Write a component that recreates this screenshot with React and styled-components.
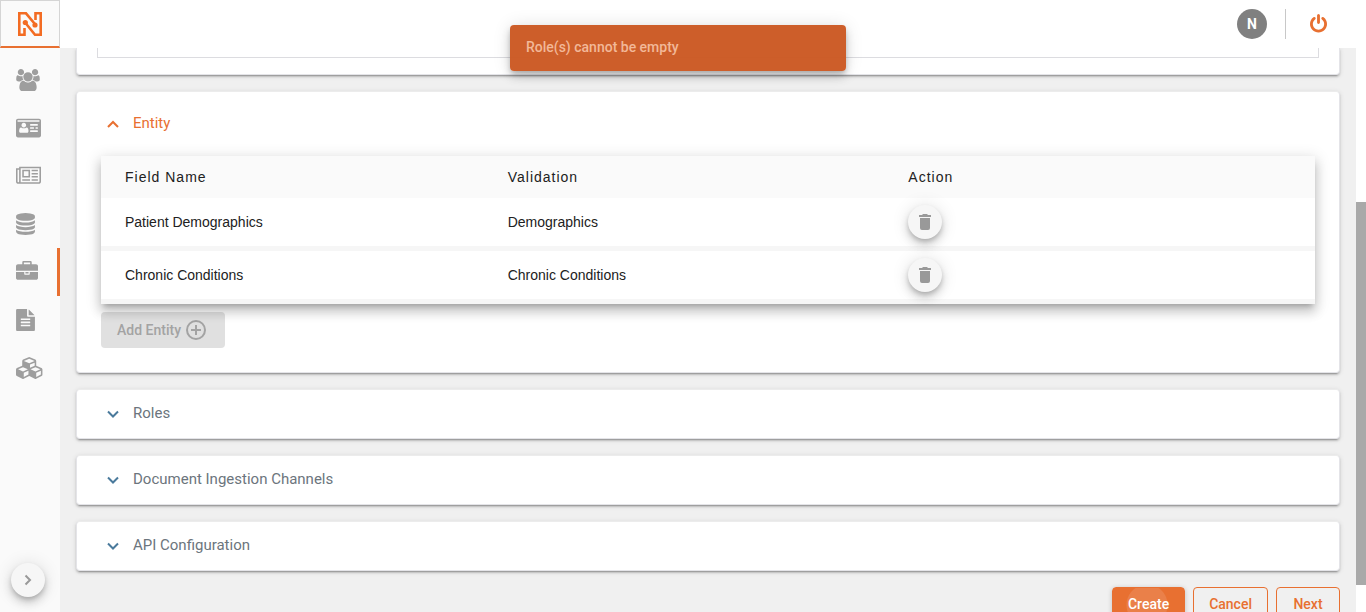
import React from "react";
import styled, { createGlobalStyle } from "styled-components";

const orange = "#e87031";
const grey = "#9e9e9e";

const GlobalStyle = createGlobalStyle`
  * { box-sizing: border-box; }
  body { margin: 0; font-family: Roboto, "Liberation Sans", sans-serif; font-size: 14px; background: #fff; }
  button { font: inherit; cursor: pointer; padding: 0; }
  h2 { margin: 0; font: inherit; }
`;

const App = styled.div`
  position: relative;
  display: flex;
  flex-direction: column;
  height: 100vh;
  overflow: hidden;
`;

const Header = styled.header`
  display: flex;
  align-items: center;
  flex: 0 0 48px;
  background: #fff;
`;

const Logo = styled.a`
  display: flex;
  align-items: center;
  justify-content: center;
  width: 60px;
  height: 48px;
  margin-right: auto;
  background: #fafafa;
  border: 1px solid #d5d5d5;
  border-bottom: 2px solid ${orange};
`;

const Avatar = styled.button`
  width: 30px;
  height: 30px;
  border: 0;
  border-radius: 50%;
  background: #808080;
  color: #fff;
  font-weight: 700;
`;

const Divider = styled.span`
  width: 1px;
  height: 30px;
  margin: 0 24px 0 18px;
  background: #c8c8c8;
`;

const PowerButton = styled.button`
  display: flex;
  margin-right: 39px;
  border: 0;
  background: none;
  color: ${orange};
`;

const Body = styled.div`
  display: flex;
  flex: 1;
  min-height: 0;
`;

const Sidebar = styled.nav`
  display: flex;
  flex-direction: column;
  flex: 0 0 60px;
  padding: 8px 0 15px;
  background: #fafafa;
`;

const NavLink = styled.a`
  display: flex;
  align-items: center;
  height: 48px;
  padding-left: 16px;
  color: ${grey};
  border-right: 3px solid ${(p) => (p.$active ? orange : "transparent")};
`;

const RoundButton = styled.button`
  display: flex;
  align-items: center;
  justify-content: center;
  width: 34px;
  height: 34px;
  border: 0;
  border-radius: 50%;
  background: #f6f6f6;
  color: #999;
  box-shadow: 0 3px 5px -1px rgba(0, 0, 0, 0.2), 0 6px 10px rgba(0, 0, 0, 0.14), 0 1px 18px rgba(0, 0, 0, 0.12);
`;

const ExpandSlot = styled.div`
  margin: auto 0 0 11px;
`;

const Main = styled.main`
  display: flex;
  flex-direction: column;
  flex: 1;
  gap: 16px;
  min-width: 0;
  padding: 0 16px;
  overflow: hidden;
  background: #f0f0f0;
`;

const Card = styled.section`
  flex: none;
  background: #fff;
  border: 1px solid #e4e4e8;
  border-top-color: #ececec;
  border-radius: 4px;
  box-shadow: 0 3px 1px -2px rgba(0, 0, 0, 0.2), 0 2px 2px rgba(0, 0, 0, 0.14), 0 1px 5px rgba(0, 0, 0, 0.12);
`;

const ScrolledCard = styled(Card)`
  padding: 0 20px 16px;
  border-top: 0;
  border-radius: 0 0 4px 4px;
`;

const ScrolledFrame = styled.div`
  height: 10px;
  border: 1px solid #dcdce0;
  border-top: 0;
`;

const CardToggle = styled.button`
  display: flex;
  align-items: center;
  gap: 14px;
  width: 100%;
  height: ${(p) => (p.$open ? 64 : 48)}px;
  padding: 0 30px;
  border: 0;
  background: none;
  color: ${(p) => (p.$open ? orange : "#6c757d")};
  font-size: 15px;
  line-height: 20px;
  text-align: left;
  svg { color: ${(p) => (p.$open ? orange : "#4a7a9c")}; }
  span { padding-bottom: 2px; }
`;

const CardBody = styled.div`
  padding: 0 24px 24px;
`;

const Table = styled.table`
  position: relative;
  width: 100%;
  margin-bottom: 8px;
  table-layout: fixed;
  border-collapse: separate;
  border-spacing: 0;
  background: #fff;
  color: #212121;
  font: 14px/20px "Liberation Sans", Arial, sans-serif;
  box-shadow: 0 5px 5px -3px rgba(0, 0, 0, 0.2), 0 8px 10px 1px rgba(0, 0, 0, 0.14), 0 3px 14px 2px rgba(0, 0, 0, 0.12);
`;

const HeadCell = styled.th`
  width: ${(p) => p.$width || "auto"};
  height: 42px;
  padding: 0;
  background: #fafafa;
  font-weight: 400;
  letter-spacing: 1px;
  text-align: left;
  &:first-child { padding-left: 24px; }
`;

const Cell = styled.td`
  height: 53px;
  padding: 0;
  border-bottom: 5px solid #f6f6f6;
  &:first-child { padding-left: 24px; }
`;

const AddButton = styled.button`
  display: flex;
  align-items: center;
  gap: 4px;
  height: 36px;
  padding: 0 18px 0 16px;
  border: 0;
  border-radius: 4px;
  background: #e0e0e0;
  color: #a3a3a3;
  font-weight: 500;
`;

const Actions = styled.div`
  display: flex;
  flex: none;
  justify-content: flex-end;
  gap: 8px;
`;

const ActionButton = styled.button`
  min-width: 64px;
  height: 36px;
  padding: 0 15px 2px;
  border: 1px solid ${orange};
  border-radius: 4px;
  background: ${(p) => (p.$primary ? `radial-gradient(circle at 48% 50%, #ea8049 20px, ${orange} 21px)` : "transparent")};
  background-origin: border-box;
  color: ${(p) => (p.$primary ? "#fff" : orange)};
  font-weight: 500;
  box-shadow: ${(p) => (p.$primary ? "0 1px 5px rgba(0, 0, 0, 0.2)" : "none")};
`;

const ScrollTrack = styled.div`
  display: grid;
  grid-template-rows: 154fr 383fr 27fr;
  flex: 0 0 10px;
  background: #fff;
`;

const ScrollThumb = styled.div`
  grid-row: 2;
  background: #a9a9a9;
`;

const Toast = styled.div`
  position: absolute;
  top: 25px;
  left: calc(50% - 5px);
  width: 336px;
  padding: 12px 16px 14px;
  transform: translateX(-50%);
  border-radius: 4px;
  background: rgba(203, 89, 35, 0.97);
  color: #f2b898;
  font-weight: 500;
  line-height: 20px;
  box-shadow: 0 3px 5px -1px rgba(0, 0, 0, 0.2), 0 6px 10px rgba(0, 0, 0, 0.14), 0 1px 18px rgba(0, 0, 0, 0.12);
`;

const Glyph = ({ units = 1792, x = 0, size = 22, d }) => (
  <svg
    width={Math.round((units * size) / 1792)}
    height={size}
    viewBox={`${x} 0 ${units} 1792`}
    fill="currentColor"
    fillRule="evenodd"
    aria-hidden="true"
  >
    <path d={d} />
  </svg>
);

const powerPath =
  "M1664 896q0 156-61 298t-164 245-245 164-298 61-298-61-245-164-164-245-61-298q0-182 80.500-343t226.500-270q43-32 95.500-25t83.500 50q32 42 24.500 94.500t-49.500 84.500q-98 74-151.500 181t-53.500 228q0 104 40.500 198.500t109.500 163.500 163.500 109.500 198.500 40.500 198.500-40.500 163.500-109.500 109.500-163.500 40.500-198.500q0-121-53.500-228t-151.500-181q-42-32-49.500-84.500t24.500-94.500q31-43 84-50t95 25q146 109 226.500 270t80.500 343zm-640-768v640q0 52-38 90t-90 38-90-38-38-90v-640q0-52 38-90t90-38 90 38 38 90z";

const navItems = [
  {
    label: "Users",
    units: 1920,
    d: "M593 896q-162 5-265 128h-134q-82 0-138-40.500t-56-118.500q0-353 124-353 6 0 43.500 21t97.500 42.500 119 21.500q67 0 133-23-5 37-5 66 0 139 81 256zm1071 637q0 120-73 189.500t-194 69.500h-874q-121 0-194-69.500t-73-189.500q0-53 3.500-103.500t14-109 26.500-108.500 43-97.500 62-81 85.500-53.500 111.500-20q10 0 43 21.500t73 48 107 48 135 21.500 135-21.500 107-48 73-48 43-21.500q61 0 111.500 20t85.500 53.500 62 81 43 97.500 26.500 108.500 14 109 3.500 103.500zm-1024-1277q0 106-75 181t-181 75-181-75-75-181 75-181 181-75 181 75 75 181zm704 384q0 159-112.500 271.500t-271.500 112.500-271.500-112.500-112.500-271.500 112.500-271.500 271.500-112.500 271.500 112.500 112.500 271.500zm576 225q0 78-56 118.500t-138 40.500h-134q-103-123-265-128 81-117 81-256 0-29-5-66 66 23 133 23 59 0 119-21.500t97.500-42.500 43.500-21q124 0 124 353zm-128-609q0 106-75 181t-181 75-181-75-75-181 75-181 181-75 181 75 75 181z",
  },
  {
    label: "Identity",
    units: 2048,
    d: "M160 128h1728q66 0 113 47t47 113v1216q0 66-47 113t-113 47h-1728q-66 0-113-47t-47-113v-1216q0-66 47-113t113-47zM128 256v128h1792v-128zM371 1280h538q54 0 84-42t30-106q0-90-30-184t-140-98q-100 74-213 74t-213-74q-110 4-140 98t-30 184q0 64 30 106t84 42zM640 467a192 192 0 1 0 1 0zM1184 576h576q32 0 32 32v64q0 32-32 32h-576q-32 0-32-32v-64q0-32 32-32zM1184 832h256q32 0 32 32v64q0 32-32 32h-256q-32 0-32-32v-64q0-32 32-32zM1632 832h128q32 0 32 32v64q0 32-32 32h-128q-32 0-32-32v-64q0-32 32-32zM1184 1088h576q32 0 32 32v64q0 32-32 32h-576q-32 0-32-32v-64q0-32 32-32z",
  },
  {
    label: "News",
    units: 2048,
    d: "M1024 512h-384v384h384v-384zm128 640v128h-640v-128h640zm0-768v640h-640v-640h640zm640 768v128h-512v-128h512zm0-256v128h-512v-128h512zm0-256v128h-512v-128h512zm0-256v128h-512v-128h512zm-1536 960v-960h-128v960q0 26 19 45t45 19 45-19 19-45zm1664 0v-1088h-1536v1088q0 33-11 64h1483q26 0 45-19t19-45zm128-1216v1216q0 80-56 136t-136 56h-1664q-80 0-136-56t-56-136v-1088h256v-128h1792z",
  },
  {
    label: "Data",
    units: 1536,
    x: 128,
    d: "M896 768q237 0 443-43t325-127v170q0 69-103 128t-280 93.500-385 34.500-385-34.500-280-93.500-103-128v-170q119 84 325 127t443 43zm0 768q237 0 443-43t325-127v170q0 69-103 128t-280 93.500-385 34.500-385-34.500-280-93.500-103-128v-170q119 84 325 127t443 43zm0-384q237 0 443-43t325-127v170q0 69-103 128t-280 93.500-385 34.500-385-34.500-280-93.500-103-128v-170q119 84 325 127t443 43zm0-1152q208 0 385 34.500t280 93.500 103 128v128q0 69-103 128t-280 93.500-385 34.500-385-34.500-280-93.500-103-128v-128q0-69 103-128t280-93.500 385-34.500z",
  },
  {
    label: "Projects",
    active: true,
    d: "M640 256h512v-128h-512v128zm1152 640v480q0 66-47 113t-113 47h-1472q-66 0-113-47t-47-113v-480h672v160q0 26 19 45t45 19h320q26 0 45-19t19-45v-160h672zm-768 0v128h-256v-128h256zm768-480v384h-1792v-384q0-66 47-113t113-47h352v-160q0-40 28-68t68-28h576q40 0 68 28t28 68v160h352q66 0 113 47t47 113z",
  },
  {
    label: "Documents",
    units: 1536,
    x: 128,
    d: "M1596 476q14 14 28 36h-472v-472q22 14 36 28zm-476 164h544v1056q0 40-28 68t-68 28h-1344q-40 0-68-28t-28-68v-1600q0-40 28-68t68-28h800v544q0 40 28 68t68 28zm160 736v-64q0-14-9-23t-23-9h-704q-14 0-23 9t-9 23v64q0 14 9 23t23 9h704q14 0 23-9t9-23zm0-256v-64q0-14-9-23t-23-9h-704q-14 0-23 9t-9 23v64q0 14 9 23t23 9h704q14 0 23-9t9-23zm0-256v-64q0-14-9-23t-23-9h-704q-14 0-23 9t-9 23v64q0 14 9 23t23 9h704q14 0 23-9t9-23z",
  },
  {
    label: "Modules",
    units: 2304,
    d: "M640 1632l384-192v-314l-384 164v342zm-64-454l404-173-404-173-404 173zm1088 454l384-192v-314l-384 164v342zm-64-454l404-173-404-173-404 173zm-448-293l384-165v-266l-384 164v267zm-64-379l441-189-441-189-441 189zm1088 518v416q0 36-19 67t-52 47l-448 224q-25 14-57 14t-57-14l-448-224q-4-2-7-4-2 2-7 4l-448 224q-25 14-57 14t-57-14l-448-224q-33-16-52-47t-19-67v-416q0-38 21.500-70t56.500-48l434-186v-400q0-38 21.500-70t56.500-48l448-192q23-10 50-10t50 10l448 192q35 16 56.500 48t21.500 70v400l434 186q36 16 57 48t21 70z",
  },
];

const LogoMark = () => (
  <svg width="26" height="26" viewBox="0 0 26 26" fill="none" stroke="#f36c23" strokeWidth="2.600" aria-hidden="true">
    <path d="M7.500 17V23.700H2.300V2.300H9L18.300 13.500M18.500 9V2.300H23.700V23.700H18L8.300 11.800" />
    <circle cx="8.300" cy="11.500" r="2.600" fill="#f36c23" stroke="none" />
    <circle cx="18" cy="14" r="2.600" fill="#f36c23" stroke="none" />
  </svg>
);

const Chevron = ({ up }) => (
  <svg width="12" height="8" viewBox="0 0 12 8" fill="none" stroke="currentColor" strokeWidth="2" aria-hidden="true">
    <path d={up ? "M1 7L6 2L11 7" : "M1 1.500L6 6.500L11 1.500"} />
  </svg>
);

const TrashIcon = () => (
  <svg width="12" height="16" viewBox="0 0 12 16" fill="currentColor" aria-hidden="true">
    <path d="M4 0h4l1 1h3v2H0V1h3zM1 4h10v10a2 2 0 0 1-2 2H3a2 2 0 0 1-2-2z" />
  </svg>
);

const PlusCircle = () => (
  <svg width="22" height="22" viewBox="0 0 22 22" fill="none" stroke="currentColor" strokeWidth="2" aria-hidden="true">
    <circle cx="11" cy="11" r="9" />
    <path d="M11 6V16M6 11H16" />
  </svg>
);

const ChevronRight = () => (
  <svg width="8" height="12" viewBox="0 0 8 12" fill="none" stroke="currentColor" strokeWidth="2" aria-hidden="true">
    <path d="M1.500 1.500L6 6L1.500 10.500" />
  </svg>
);

const entities = [
  ["Patient Demographics", "Demographics"],
  ["Chronic Conditions", "Chronic Conditions"],
];

const Section = ({ title, open, children }) => (
  <Card>
    <h2>
      <CardToggle type="button" $open={open} aria-expanded={!!open}>
        <Chevron up={open} />
        <span>{title}</span>
      </CardToggle>
    </h2>
    {children}
  </Card>
);

export default function EntityPage() {
  return (
    <App>
      <GlobalStyle />
      <Header>
        <Logo href="#" aria-label="Home">
          <LogoMark />
        </Logo>
        <Avatar type="button">N</Avatar>
        <Divider />
        <PowerButton type="button" aria-label="Log out">
          <Glyph units={1536} x={128} size={20} d={powerPath} />
        </PowerButton>
      </Header>
      <Body>
        <Sidebar>
          {navItems.map(({ label, active, ...icon }) => (
            <NavLink key={label} href="#" aria-label={label} $active={active}>
              <Glyph {...icon} />
            </NavLink>
          ))}
          <ExpandSlot>
            <RoundButton type="button" aria-label="Expand menu">
              <ChevronRight />
            </RoundButton>
          </ExpandSlot>
        </Sidebar>
        <Main>
          <ScrolledCard>
            <ScrolledFrame />
          </ScrolledCard>
          <Section title="Entity" open>
            <CardBody>
              <Table>
                <thead>
                  <tr>
                    <HeadCell $width="33.500%">Field Name</HeadCell>
                    <HeadCell $width="33%">Validation</HeadCell>
                    <HeadCell>Action</HeadCell>
                  </tr>
                </thead>
                <tbody>
                  {entities.map(([name, validation]) => (
                    <tr key={name}>
                      <Cell>{name}</Cell>
                      <Cell>{validation}</Cell>
                      <Cell>
                        <RoundButton type="button" aria-label={`Delete ${name}`}>
                          <TrashIcon />
                        </RoundButton>
                      </Cell>
                    </tr>
                  ))}
                </tbody>
              </Table>
              <AddButton type="button">
                Add Entity
                <PlusCircle />
              </AddButton>
            </CardBody>
          </Section>
          <Section title="Roles" />
          <Section title="Document Ingestion Channels" />
          <Section title="API Configuration" />
          <Actions>
            <ActionButton type="button" $primary>Create</ActionButton>
            <ActionButton type="button">Cancel</ActionButton>
            <ActionButton type="button">Next</ActionButton>
          </Actions>
        </Main>
        <ScrollTrack>
          <ScrollThumb />
        </ScrollTrack>
      </Body>
      <Toast role="alert">Role(s) cannot be empty</Toast>
    </App>
  );
}
